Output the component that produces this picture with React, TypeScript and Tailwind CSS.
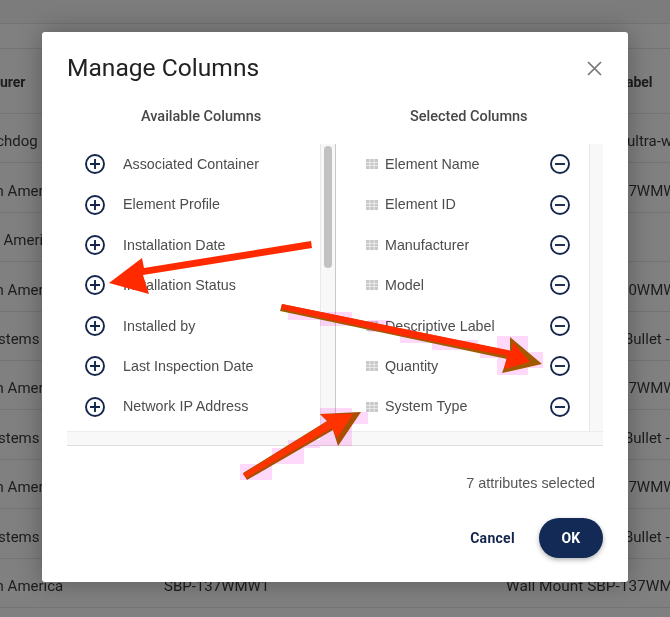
const available = [
  "Associated Container",
  "Element Profile",
  "Installation Date",
  "Installation Status",
  "Installed by",
  "Last Inspection Date",
  "Network IP Address",
];

const selected = [
  "Element Name",
  "Element ID",
  "Manufacturer",
  "Model",
  "Descriptive Label",
  "Quantity",
  "System Type",
];

const rows = [
  { left: "Watchdog", leftClass: "-ml-[30px]", right: "ultra-wide", rightClass: "ml-[121px]" },
  { left: "North America", leftClass: "-ml-[34px]", right: "37WMW1", rightClass: "ml-[114px]" },
  { left: "S. America", leftClass: "-ml-[13px]", right: "I", rightClass: "ml-[117px]" },
  { left: "North America", leftClass: "-ml-[34px]", right: "00WMW1", rightClass: "ml-[114px]" },
  { left: "Systems", leftClass: "-ml-[18px]", right: "Bullet - 4MP", rightClass: "ml-[118px]" },
  { left: "North America", leftClass: "-ml-[34px]", right: "37WMW1", rightClass: "ml-[114px]" },
  { left: "Systems", leftClass: "-ml-[18px]", right: "Bullet - 4MP", rightClass: "ml-[118px]" },
  { left: "North America", leftClass: "-ml-[34px]", right: "37WMW1", rightClass: "ml-[114px]" },
  { left: "Systems", leftClass: "-ml-[18px]", right: "Bullet - 4MP", rightClass: "ml-[118px]" },
];

function PlusIcon() {
  return (
    <svg width="20" height="20" viewBox="0 0 20 20" fill="none" stroke="#14264d" strokeWidth="1.9">
      <circle cx="10" cy="10" r="9" />
      <path d="M10 5v10M5 10h10" />
    </svg>
  );
}

function MinusIcon() {
  return (
    <svg width="20" height="20" viewBox="0 0 20 20" fill="none" stroke="#14264d" strokeWidth="1.9">
      <circle cx="10" cy="10" r="9" />
      <path d="M5 10h10" />
    </svg>
  );
}

function DragIcon() {
  return (
    <svg width="12" height="10" viewBox="0 0 12 10" fill="#c9c9c9">
      <rect x="0" y="0" width="3.6" height="3" />
      <rect x="4.2" y="0" width="3.6" height="3" />
      <rect x="8.4" y="0" width="3.6" height="3" />
      <rect x="0" y="3.5" width="3.6" height="3" />
      <rect x="4.2" y="3.5" width="3.6" height="3" />
      <rect x="8.4" y="3.5" width="3.6" height="3" />
      <rect x="0" y="7" width="3.6" height="3" />
      <rect x="4.2" y="7" width="3.6" height="3" />
      <rect x="8.4" y="7" width="3.6" height="3" />
    </svg>
  );
}

function Arrows() {
  return (
    <svg className="absolute left-0 top-0" width="670" height="617" viewBox="0 0 670 617">
      {/* compression halo around the two lower arrows */}
      <g fill="#ffd9fb" className="mix-blend-multiply">
        <rect x="288" y="312" width="64" height="8" />
        <rect x="320" y="312" width="32" height="14" />
        <rect x="368" y="320" width="22" height="12" />
        <rect x="400" y="336" width="32" height="7" />
        <rect x="432" y="340" width="46" height="10" />
        <rect x="480" y="350" width="17" height="8" />
        <rect x="497" y="336" width="31" height="39" />
        <rect x="528" y="352" width="15" height="16" />
        <rect x="240" y="464" width="32" height="16" />
        <rect x="272" y="448" width="32" height="16" />
        <rect x="288" y="440" width="32" height="8" />
        <rect x="320" y="408" width="32" height="38" />
        <rect x="352" y="412" width="16" height="12" />
      </g>
      {/* top arrow */}
      <polygon fill="#ff2a00" points="311,241 312,248 143,275 149,294 109,283 142,258 144,268" />
      {/* middle arrow */}
      <polygon fill="#a05a00" points="282,304 280,311 507,359 502,373 542,364 510,337 510,351" />
      <polygon fill="#ff2a00" points="282,304 281,309 400,335 507,356 504,369 530,362 513,342 512,351" />
      {/* bottom arrow */}
      <polygon fill="#a85000" points="243,473 247,480 333,430 338,446 361,412 320,414 327,421" />
      <polygon fill="#ff3300" points="243,474 246,478 332,428 337,438 353,414 320,414 328,421" />
    </svg>
  );
}

export default function App() {
  return (
    <div className="relative h-[617px] w-[670px] overflow-hidden bg-[#808080] font-['Roboto',sans-serif] text-[15px] text-[#1c1c1c]">
      {/* table behind the dialog */}
      <div className="h-[24px] border-b border-[#747474] bg-[#7c7c7c]" />
      <div className="h-[25px] border-b border-[#747474]" />
      <div className="flex h-[65px] items-center border-b border-[#747474] pt-[2px] text-[14px] font-bold whitespace-nowrap">
        <div className="w-[164px] shrink-0">
          <span className="-ml-[60px] inline-block">Manufacturer</span>
        </div>
        <div className="w-[342px] shrink-0" />
        <div className="min-w-0 flex-1">
          <span className="ml-[38px] inline-block">Descriptive Label</span>
        </div>
      </div>
      {rows.map((row, i) => (
        <div key={i} className="flex h-[49.4px] items-center border-b border-[#747474] pt-[7px] whitespace-nowrap">
          <div className="w-[164px] shrink-0">
            <span className={`inline-block ${row.leftClass}`}>{row.left}</span>
          </div>
          <div className="w-[342px] shrink-0" />
          <div className="min-w-0 flex-1">
            <span className={`inline-block ${row.rightClass}`}>{row.right}</span>
          </div>
        </div>
      ))}
      <div className="flex h-[49.4px] items-center border-b border-[#747474] pt-[7px] whitespace-nowrap">
        <div className="w-[164px] shrink-0">
          <span className="-ml-[34px] inline-block">North America</span>
        </div>
        <div className="w-[342px] shrink-0">SBP-137WMW1</div>
        <div className="min-w-0 flex-1 text-[15.4px]">Wall Mount SBP-137WMW1</div>
      </div>

      {/* dialog */}
      <div className="absolute left-[42px] top-[32px] flex h-[550px] w-[586px] flex-col rounded-[3px] bg-white px-[25px] font-['Liberation_Sans',sans-serif] shadow-[0_0_26px_rgba(0,0,0,0.3)]">
        <div className="flex h-[72px] items-center justify-between pr-[1px]">
          <h1 className="font-['Roboto',sans-serif] text-[24.6px] leading-none text-[#222]">Manage Columns</h1>
          <svg width="15" height="15" viewBox="0 0 15 15" fill="none" stroke="#777" strokeWidth="1.7">
            <path d="M1 1l13 13M14 1L1 14" />
          </svg>
        </div>

        <div className="flex h-[40px] font-['Roboto',sans-serif] text-[14.5px] font-medium text-[#474747]">
          <div className="w-[269px] pl-[74px] pt-[2px]">Available Columns</div>
          <div className="pl-[74px] pt-[2px]">Selected Columns</div>
        </div>

        <div className="flex h-[287px] w-[536px]">
          <div className="flex w-[269px] border-r border-[#c9c9c9]">
            <div className="flex w-[253px] flex-col pl-[18px]">
              {available.map((name) => (
                <div key={name} className="flex h-[40.4px] shrink-0 items-center gap-[18px]">
                  <PlusIcon />
                  <span className="pt-[1px] text-[14.3px] text-[#4d4d4d]">{name}</span>
                </div>
              ))}
            </div>
            <div className="w-[15px] border-l border-[#e8e8e8] bg-[#f8f8f8] px-[3px] pt-[2px]">
              <div className="h-[122px] w-[8px] rounded-full bg-[#c2c2c2]" />
            </div>
          </div>
          <div className="flex flex-1">
            <div className="flex w-[253px] flex-col pl-[30px] pr-[19px]">
              {selected.map((name) => (
                <div key={name} className="flex h-[40.4px] shrink-0 items-center">
                  <DragIcon />
                  <span className="ml-[7px] flex-1 pt-[1px] text-[14.3px] text-[#4d4d4d]">{name}</span>
                  <MinusIcon />
                </div>
              ))}
            </div>
            <div className="w-[14px] border-l border-[#e8e8e8] bg-[#f8f8f8]" />
          </div>
        </div>
        <div className="h-[15px] w-[536px] border-y border-t-[#ececec] border-b-[#dedede] bg-[#f8f8f8]" />

        <div className="w-[528px] pt-[27px] text-right text-[14.4px] leading-[20px] text-[#555]">7 attributes selected</div>

        <div className="flex w-[536px] items-center justify-end gap-[24px] pt-[25px] font-['Roboto',sans-serif] text-[14px] font-bold tracking-[0.3px]">
          <span className="text-[#14264d]">Cancel</span>
          <div className="flex h-[40px] w-[64px] items-center justify-center rounded-full bg-[#122a55] text-white shadow-[0_2px_5px_rgba(0,0,0,0.3)]">
            OK
          </div>
        </div>
      </div>

      <Arrows />
    </div>
  );
}
